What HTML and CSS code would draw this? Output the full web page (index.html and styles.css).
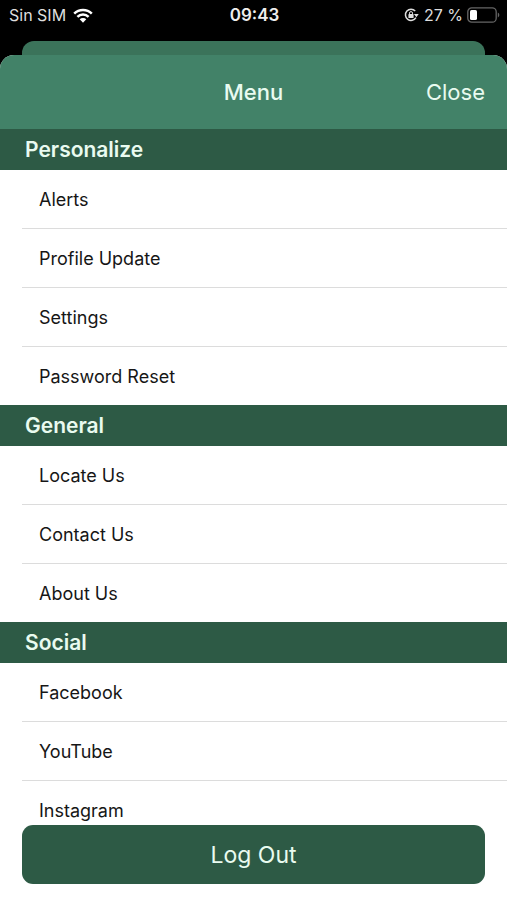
FILE: index.html
```html
<!DOCTYPE html>
<html lang="en">
<head>
<meta charset="utf-8">
<meta name="viewport" content="width=device-width, initial-scale=1">
<title>Menu</title>
<link rel="stylesheet" href="styles.css">
</head>
<body>
<div class="status">
  <div class="status-left">
    <span>Sin SIM</span>
    <svg class="wifi" viewBox="0 0 20 15" aria-hidden="true">
      <path d="M1.2 5.6a12.5 12.5 0 0 1 17.6 0M4.4 8.9a8 8 0 0 1 11.2 0" fill="none" stroke="currentColor" stroke-width="2.5"/>
      <path d="M6.7 11.3a4.7 4.7 0 0 1 6.6 0L10 14.7z" fill="currentColor"/>
    </svg>
  </div>
  <time class="clock">09:43</time>
  <div class="status-right">
    <svg class="lock" viewBox="0 0 15 14" aria-hidden="true">
      <path d="M11.2 3A5.6 5.6 0 1 0 11.9 9.6" fill="none" stroke="currentColor" stroke-width="1.5"/>
      <path d="M9.9 6h4.8l-2.3 3.2z" fill="currentColor"/>
      <rect x="4.4" y="6.1" width="5.2" height="4" rx=".6" fill="currentColor"/>
      <path d="M5.5 6.4V5.1a1.5 1.5 0 0 1 3 0v1.3" fill="none" stroke="currentColor"/>
    </svg>
    <span>27 %</span>
    <svg class="battery" viewBox="0 0 33 16" aria-hidden="true">
      <rect x=".8" y=".8" width="28.4" height="14.4" rx="4" fill="none" stroke="#666" stroke-width="1.3"/>
      <rect x="3" y="3" width="7" height="10" rx="1.6" fill="#fff"/>
      <path d="M30.8 5.6c2 .8 2 4 0 4.8z" fill="#666"/>
    </svg>
  </div>
</div>
<div class="sheet-behind"></div>
<main class="sheet">
  <header class="bar">
    <h1>Menu</h1>
    <button class="close" type="button">Close</button>
  </header>
  <nav>
    <h2>Personalize</h2>
    <ul>
      <li><a href="#alerts">Alerts</a></li>
      <li><a href="#profile">Profile Update</a></li>
      <li><a href="#settings">Settings</a></li>
      <li><a href="#password">Password Reset</a></li>
    </ul>
    <h2>General</h2>
    <ul>
      <li><a href="#locate">Locate Us</a></li>
      <li><a href="#contact">Contact Us</a></li>
      <li><a href="#about">About Us</a></li>
    </ul>
    <h2>Social</h2>
    <ul>
      <li><a href="#facebook">Facebook</a></li>
      <li><a href="#youtube">YouTube</a></li>
      <li><a href="#instagram">Instagram</a></li>
    </ul>
  </nav>
</main>
<footer class="footer"><button class="logout" type="button">Log Out</button></footer>
</body>
</html>
```
FILE: styles.css
```css
* { box-sizing: border-box; }

body {
  margin: 0;
  height: 100vh;
  display: flex;
  flex-direction: column;
  overflow: hidden;
  background: #000;
  color: #161616;
  font-family: Inter, "Liberation Sans", sans-serif;
}

h1, h2, ul { margin: 0; padding: 0; }
button { border: 0; font: inherit; cursor: pointer; }

.status {
  flex: none;
  display: grid;
  grid-template-columns: 1fr auto 1fr;
  align-items: center;
  height: 30px;
  margin-bottom: 11px;
  padding: 0 7px 0 9px;
  color: #dedede;
  font-size: 16px;
}
.status-left, .status-right { display: flex; align-items: center; gap: 7px; }
.status-right { justify-content: flex-end; gap: 4px; }
.clock { font-weight: 600; font-size: 17px; color: #eee; }
.wifi { width: 20px; height: 15px; color: #fff; }
.lock { width: 15px; height: 14px; margin-right: 1px; }
.battery { width: 33px; height: 16px; }

.sheet-behind {
  flex: none;
  height: 14px;
  margin: 0 22px;
  border-radius: 12px 12px 0 0;
  background: #3b735a;
}

.sheet {
  flex: 1;
  min-height: 0;
  overflow: hidden;
  border-radius: 14px 14px 0 0;
  background: #fff;
}

.bar {
  display: grid;
  grid-template-columns: 1fr auto 1fr;
  align-items: center;
  height: 74px;
  padding: 0 22px;
  background: #428268;
  color: #e9fbf0;
  font-size: 22px;
}
.bar h1 { grid-column: 2; font-size: 22px; font-weight: 500; }
.close { justify-self: end; padding: 0; background: none; color: inherit; }

h2 {
  height: 41px;
  padding-left: 25px;
  background: #2d5a45;
  color: #e9fbf0;
  font-size: 21px;
  font-weight: 600;
  line-height: 42px;
}

ul { padding-left: 22px; list-style: none; }
li { height: 59px; border-bottom: 1px solid #dcdcdc; }
li:last-child { height: 58px; border-bottom: 0; }
li a {
  display: block;
  padding-left: 17px;
  color: inherit;
  font-size: 18px;
  line-height: 60px;
  text-decoration: none;
}

.footer { position: fixed; inset: auto 0 0; padding: 0 22px 16px; }
.logout {
  display: block;
  width: 100%;
  height: 59px;
  border-radius: 11px;
  background: #2d5a45;
  color: #e9fbf0;
  font-size: 23px;
}
```
